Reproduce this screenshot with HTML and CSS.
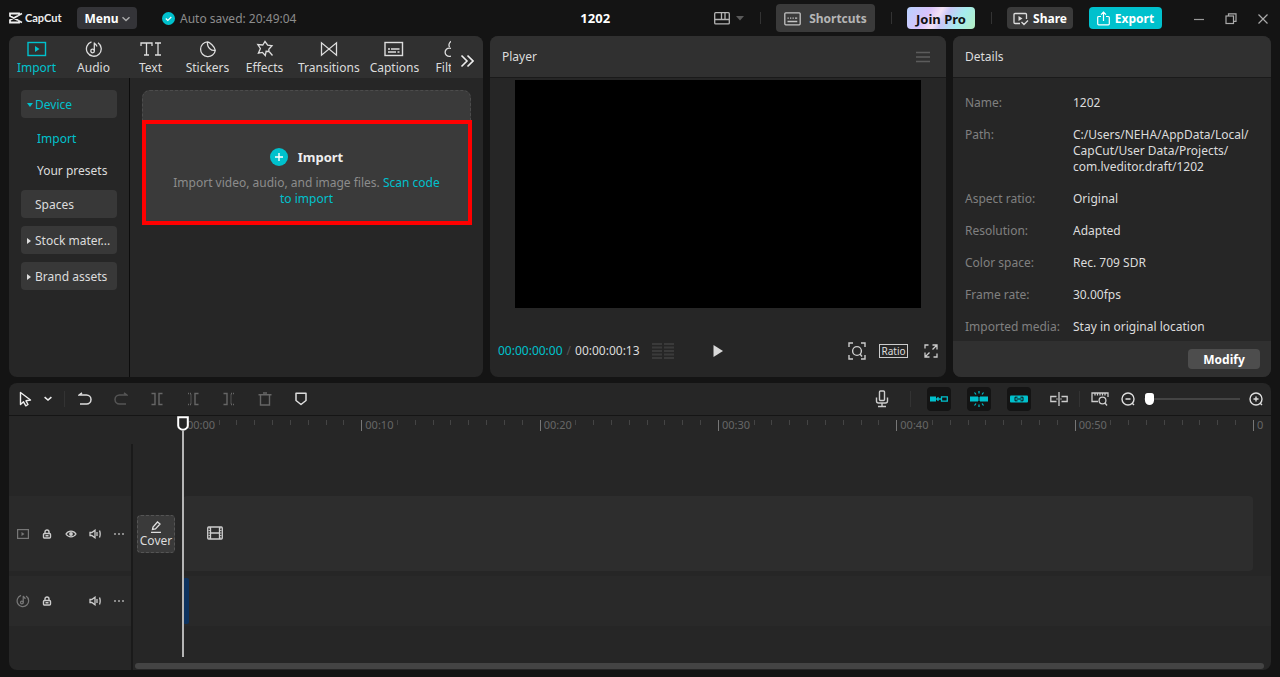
FILE: index.html
```html
<!DOCTYPE html>
<html lang="en">
<head>
    <meta charset="UTF-8">
    <meta name="viewport" content="width=device-width, initial-scale=1.0">
    <title>CapCut - 1202</title>
    <link rel="stylesheet" href="styles.css">
</head>
<body>
    <!-- Title bar -->
    <header class="topbar">
        <div class="logo">
            <svg width="14" height="12" viewBox="0 0 14 12"><path d="M13 1.5L10 3V1.5H1V4l8 4.2M13 10.5L10 9v1.5H1V8l8-4.2" fill="none" stroke="#eee" stroke-width="1.8"/></svg>
            <span>CapCut</span>
        </div>
        <button class="btn menu-btn">Menu<svg width="8" height="6" viewBox="0 0 8 6"><path d="M.5 1.200l3.500 3.300 3.500-3.300" fill="none" stroke="#aaa" stroke-width="1.500"/></svg></button>
        <div class="saved">
            <svg width="13" height="13" viewBox="0 0 13 13"><circle cx="6.5" cy="6.5" r="6.5" fill="#00c1cd"/><path d="M3.8 6.5l2 2 3.5-3.5" fill="none" stroke="#fff" stroke-width="1.2"/></svg>
            <span>Auto saved: 20:49:04</span>
        </div>
        <h1 class="project-title">1202</h1>
        <div class="top-actions">
            <button class="layout-btn" aria-label="Layout">
                <svg width="16" height="13" viewBox="0 0 16 13" fill="none" stroke="#b5b5b5" stroke-width="1.3"><rect x=".7" y=".7" width="14.6" height="11.2" rx="1"/><path d="M1 7.5h14M7.5 1v6.5M11 1v6.5"/></svg>
                <svg width="8" height="5" viewBox="0 0 8 5"><path d="M0 0h8L4 4.5z" fill="#5a5a5a"/></svg>
            </button>
            <span class="sep"></span>
            <button class="btn shortcuts-btn"><svg width="17" height="14" viewBox="0 0 17 14" fill="none" stroke="#c4c4c4" stroke-width="1.3"><rect x=".8" y=".8" width="15.4" height="12" rx="1"/><path d="M3.5 6.2h1.3M6 6.2h1.3M8.5 6.2h1.3M11 6.2h2.2M3.500 9.500h9.800"/></svg>Shortcuts</button>
            <span class="sep"></span>
            <button class="btn pro-btn">Join Pro</button>
            <span class="sep"></span>
            <button class="btn share-btn"><svg width="16" height="14" viewBox="0 0 16 14" fill="none" stroke="#ddd" stroke-width="1.3"><path d="M7 11.5H2a1 1 0 0 1-1-1v-8a1 1 0 0 1 1-1h10.500a1 1 0 0 1 1 1V7M8.500 10l2.500 2.500 4-4"/><path d="M5.500 4l4 2.500-4 2.500z" fill="#ddd" stroke="none"/></svg>Share</button>
            <button class="btn export-btn"><svg width="13" height="15" viewBox="0 0 13 15" fill="none" stroke="#fff" stroke-width="1.2"><path d="M4 5.500H1.700a1 1 0 0 0-1 1v6.300a1 1 0 0 0 1 1h9.600a1 1 0 0 0 1-1V6.500a1 1 0 0 0-1-1H9M6.500 10V1.300M4 3.700l2.500-2.500L9 3.700"/></svg>Export</button>
        </div>
        <div class="window-controls">
            <button aria-label="Minimize"><svg width="12" height="12" viewBox="0 0 12 12"><path d="M1 6.500h10" stroke="#999" stroke-width="1.2"/></svg></button>
            <button aria-label="Restore"><svg width="12" height="12" viewBox="0 0 12 12" fill="none" stroke="#aaa" stroke-width="1.200"><rect x="1" y="3" width="7.500" height="7.500"/><path d="M3.500 3V.8h7.500v7.500H8.500"/></svg></button>
            <button aria-label="Close"><svg width="12" height="12" viewBox="0 0 12 12"><path d="M1.500 1.500l9 9M10.500 1.500l-9 9" stroke="#aaa" stroke-width="1.200"/></svg></button>
        </div>
    </header>

    <main class="workspace">
        <!-- Media panel -->
        <section class="panel media">
            <nav class="tabs">
                <div class="tab-list">
                    <button class="tab active"><svg width="20" height="16" viewBox="0 0 20 16"><rect x="1" y="1.500" width="17.500" height="13" fill="none" stroke="#00c1cd" stroke-width="1.400"/><path d="M8 5l4.500 3L8 11z" fill="#00c1cd"/></svg>Import</button>
                    <button class="tab"><svg width="18" height="18" viewBox="0 0 18 18" fill="none" stroke="#ddd" stroke-width="1.300"><path d="M6.500 1.800A7.400 7.400 0 1 0 13 2.700M9.300 11V2.500c.3 1.800 2.500 1.800 2.500 4"/><circle cx="7.600" cy="11" r="1.800"/></svg>Audio</button>
                    <button class="tab"><svg width="22" height="16" viewBox="0 0 22 16" fill="none" stroke="#ddd" stroke-width="1.300"><path d="M1 5V2h11v3M6.500 2v12M4 14h5M15 2h6M15 14h6M18 2v12"/></svg>Text</button>
                    <button class="tab"><svg width="18" height="18" viewBox="0 0 18 18" fill="none" stroke="#ddd" stroke-width="1.300"><path d="M8.500 1.800a7.400 7.400 0 1 0 7.800 8.500M8.500 1.800c1.800 0 7.500 5 7.800 8.500-3.500.8-8.500-2-7.800-8.500z"/></svg>Stickers</button>
                    <button class="tab"><svg width="18" height="18" viewBox="0 0 18 18" fill="none" stroke="#ddd" stroke-width="1.300"><path d="M13 11.500l-.2-2.200 3.200-3.500-4.300-.7L9 1.500 6.800 5 1.800 4.500l2.600 4-2 4.700 4-.8 2.900 3.100.8-4.200zM13.500 12l3 3.500"/></svg>Effects</button>
                    <button class="tab"><svg width="18" height="16" viewBox="0 0 18 16" fill="none" stroke="#ddd" stroke-width="1.300"><path d="M1.500 1.800v12.400l15-12.400v12.400z"/></svg>Transitions</button>
                    <button class="tab"><svg width="20" height="16" viewBox="0 0 20 16" fill="none" stroke="#ddd" stroke-width="1.400"><rect x="1" y="1.500" width="17.500" height="13"/><path d="M4 8h2M7 8h8.500M4 11h8M13.500 11h2"/></svg>Captions</button>
                    <button class="tab"><svg width="18" height="18" viewBox="0 0 18 18" fill="none" stroke="#ddd" stroke-width="1.300"><path d="M5.500 7A4 4 0 1 1 12.500 7M8.500 9.500a4.200 4.200 0 1 0 0 5.500"/><circle cx="12.500" cy="12" r="4.200"/></svg>Filters</button>
                </div>
                <button class="more-tabs" aria-label="More"><svg width="14" height="14" viewBox="0 0 14 14" fill="none" stroke="#eee" stroke-width="1.600"><path d="M1.500 1.500L7 7l-5.500 5.500M7.500 1.500L13 7l-5.500 5.500"/></svg></button>
            </nav>
            <div class="media-body">
                <aside class="sidebar">
                    <button class="side-item open">Device</button>
                    <div class="side-sub">
                        <a href="#" class="active">Import</a>
                        <a href="#">Your presets</a>
                    </div>
                    <button class="side-item">Spaces</button>
                    <button class="side-item closed">Stock mater...</button>
                    <button class="side-item closed">Brand assets</button>
                </aside>
                <div class="library">
                    <div class="dropzone">
                        <button class="import-btn"><svg width="18" height="18" viewBox="0 0 18 18"><circle cx="9" cy="9" r="9" fill="#00c1cd"/><path d="M9 5v8M5 9h8" stroke="#fff" stroke-width="1.400"/></svg>Import</button>
                        <p>Import video, audio, and image files. <a href="#">Scan code<br>to import</a></p>
                        <div class="highlight"></div>
                    </div>
                </div>
            </div>
        </section>

        <!-- Player panel -->
        <section class="panel player">
            <div class="panel-header">
                <h2>Player</h2>
                <button aria-label="Player menu"><svg width="14" height="12" viewBox="0 0 14 12"><path d="M0 1.500h14M0 6h14M0 10.500h14" stroke="#5c5c5c" stroke-width="1.300"/></svg></button>
            </div>
            <div class="screen"></div>
            <div class="player-controls">
                <div class="timecode"><span class="current">00:00:00:00</span><span class="slash">/</span><span>00:00:00:13</span>
                    <svg width="22" height="16" viewBox="0 0 22 16" stroke="#3a3a3a" stroke-width="2"><path d="M0 1h10M0 4.500h10M0 8h10M0 11.500h10M0 15h10M12 1h10M12 4.500h10M12 8h10M12 11.500h10M12 15h10"/></svg>
                </div>
                <button class="play-btn" aria-label="Play"><svg width="10" height="12" viewBox="0 0 10 12"><path d="M.5 0l9.500 6-9.500 6z" fill="#d8d8d8"/></svg></button>
                <div class="view-controls">
                    <button aria-label="Zoom"><svg width="18" height="18" viewBox="0 0 18 18" fill="none" stroke="#ccc" stroke-width="1.400"><path d="M1 5V1h4M13 1h4v4M17 13v4h-4M5 17H1v-4M12 12l2 2.500"/><circle cx="9" cy="9" r="4.400"/></svg></button>
                    <button class="ratio-btn">Ratio</button>
                    <button class="fullscreen-btn" aria-label="Full screen"><svg width="14" height="14" viewBox="0 0 14 14" fill="none" stroke="#ccc" stroke-width="1.300"><path d="M1 4.500V1h3.500M9.500 13H13V9.500M8.500 1H13v4.500M13 1L8.500 5.500M1 8.500V13h4.500M1 13l4.500-4.500"/></svg></button>
                </div>
            </div>
        </section>

        <!-- Details panel -->
        <section class="panel details">
            <div class="panel-header">
                <h2>Details</h2>
            </div>
            <dl class="detail-list">
                <dt>Name:</dt><dd>1202</dd>
                <dt>Path:</dt><dd>C:/Users/NEHA/AppData/Local/<br>CapCut/User Data/Projects/<br>com.lveditor.draft/1202</dd>
                <dt>Aspect ratio:</dt><dd>Original</dd>
                <dt>Resolution:</dt><dd>Adapted</dd>
                <dt>Color space:</dt><dd>Rec. 709 SDR</dd>
                <dt>Frame rate:</dt><dd>30.00fps</dd>
                <dt>Imported media:</dt><dd>Stay in original location</dd>
            </dl>
            <div class="panel-footer">
                <button class="btn modify-btn">Modify</button>
            </div>
        </section>
    </main>

    <!-- Timeline -->
    <section class="panel timeline">
        <div class="toolbar">
            <button class="tool" aria-label="Select"><svg width="14" height="16" viewBox="0 0 14 16"><path d="M1.500 1.500v12l3-2.700 2.300 4 2.200-1.300-2-3.700 4.500-.8z" fill="none" stroke="#eee" stroke-width="1.400" stroke-linejoin="round"/></svg></button>
            <button class="tool-caret" aria-label="Select mode"><svg width="8" height="6" viewBox="0 0 8 6"><path d="M.6 1.200L4 4l3.400-2.800" fill="none" stroke="#eee" stroke-width="1.600"/></svg></button>
            <span class="sep"></span>
            <div class="tool-group">
                <button class="tool" aria-label="Undo"><svg width="14" height="14" viewBox="0 0 14 14" fill="none" stroke="#ddd" stroke-width="1.500"><path d="M4 .8L1.200 3H8.500a4.500 4.500 0 0 1 0 9H2"/></svg></button>
                <button class="tool" aria-label="Redo"><svg width="14" height="14" viewBox="0 0 14 14" fill="none" stroke="#555" stroke-width="1.500"><path d="M10 .8L12.800 3H5.500a4.500 4.500 0 0 0 0 9H12"/></svg></button>
                <button class="tool" aria-label="Split"><svg width="12" height="14" viewBox="0 0 12 14" fill="none" stroke="#666" stroke-width="1.400"><path d="M.5 1.500H4v11H.5M11.500 1.500H8v11h3.500"/></svg></button>
                <button class="tool" aria-label="Delete left"><svg width="12" height="14" viewBox="0 0 12 14" fill="none" stroke="#666" stroke-width="1.400"><path d="M1 1.500h3v11H1" stroke-dasharray="1 1"/><path d="M11.500 1.500H8v11h3.500"/></svg></button>
                <button class="tool" aria-label="Delete right"><svg width="12" height="14" viewBox="0 0 12 14" fill="none" stroke="#666" stroke-width="1.400"><path d="M.5 1.500H4v11H.5"/><path d="M11 1.500H8v11h3" stroke-dasharray="1 1"/></svg></button>
                <button class="tool" aria-label="Delete"><svg width="14" height="14" viewBox="0 0 14 14" fill="none" stroke="#666" stroke-width="1.400"><path d="M.5 2.800h13M2.500 2.800v10.200h9V2.800M5 1h4"/></svg></button>
                <button class="tool" aria-label="Marker"><svg width="12" height="14" viewBox="0 0 12 14"><path d="M1 1.200h10v7.300L6 12.500 1 8.500z" fill="none" stroke="#ddd" stroke-width="1.500" stroke-linejoin="round"/></svg></button>
            </div>
            <div class="toolbar-right">
                <button class="tool" aria-label="Record"><svg width="14" height="18" viewBox="0 0 14 18" fill="none" stroke="#ccc" stroke-width="1.400"><rect x="4.500" y="1" width="5" height="9.500" rx="1"/><path d="M1.500 7.500v3.500a2 2 0 0 0 2 2h7a2 2 0 0 0 2-2V7.500M7 13v3.500M3 16.500h8"/></svg></button>
                <span class="sep wide"></span>
                <div class="mode-group">
                    <button class="tool mode" aria-label="Main track magnet"><svg width="18" height="8" viewBox="0 0 18 8"><path d="M0 1.500h6v5H0z" fill="#00c1cd"/><path d="M6.500 4h5M8.500 2.200L6.700 4l1.800 1.800M11.500 1.800h5.800v4.400h-5.800z" fill="none" stroke="#00c1cd" stroke-width="1.300"/></svg></button>
                    <button class="tool mode" aria-label="Auto snapping"><svg width="18" height="16" viewBox="0 0 18 16"><path d="M0 5.500h8v5H0zM10 5.500h8v5h-8zM8 6h2v4H8z" fill="#00c1cd"/><path d="M9 0v2.500M4.500 1.500L6 3.500M13.500 1.500L12 3.500M9 13.500V16M4.500 14.500L6 12.500M13.500 14.500L12 12.500" stroke="#00c1cd" stroke-width="1.200"/><path d="M9 6v4" stroke="#141414"/></svg></button>
                    <button class="tool mode" aria-label="Linkage"><svg width="18" height="8" viewBox="0 0 18 8"><rect y=".5" width="18" height="7" rx="1" fill="#00c1cd"/><path d="M7.500 2.200H5v3.600h2.500M10.500 2.200H13v3.600h-2.500M6.500 4h5" fill="none" stroke="#141414" stroke-width="1"/></svg></button>
                    <button class="tool" aria-label="Preview axis"><svg width="18" height="14" viewBox="0 0 18 14" fill="none" stroke="#ccc" stroke-width="1.300"><path d="M6.500 4.500H.8v5h5.700M11.500 4.500h5.700v5h-5.700M9 0v14M6.500 7h1M10.500 7h1"/></svg></button>
                </div>
                <span class="sep"></span>
                <button class="tool" aria-label="Preview"><svg width="18" height="14" viewBox="0 0 18 14" fill="none" stroke="#ccc" stroke-width="1.300"><path d="M7 9.500H1V1h16v4M4 1.500v2M6.500 1.500v2M9 1.500v2M11.500 1.500v2M14 1.500v2M14 11l2 2.500"/><circle cx="11.500" cy="8.500" r="3.400"/></svg></button>
                <button class="tool zoom-out" aria-label="Zoom out"><svg width="14" height="14" viewBox="0 0 14 14" fill="none" stroke="#ddd" stroke-width="1.400"><circle cx="7" cy="7" r="6"/><path d="M4.500 7h5M11 11l2 2"/></svg></button>
                <input class="zoom" type="range" min="0" max="100" value="1" aria-label="Timeline zoom">
                <button class="tool" aria-label="Zoom in"><svg width="14" height="14" viewBox="0 0 14 14" fill="none" stroke="#ddd" stroke-width="1.400"><circle cx="7" cy="7" r="6"/><path d="M4.500 7h5M7 4.500v5M11 11l2 2"/></svg></button>
            </div>
        </div>
        <div class="timeline-body">
            <div class="track-heads">
                <div class="track-head video">
                    <span><svg width="12" height="10" viewBox="0 0 12 10"><rect x=".6" y=".6" width="10.800" height="8.800" fill="none" stroke="#777" stroke-width="1.200"/><path d="M4.500 3l3 2-3 2z" fill="#777"/></svg></span>
                    <button aria-label="Lock"><svg width="10" height="10" viewBox="0 0 10 10" fill="none" stroke="#ccc" stroke-width="1.400"><rect x="1.500" y="4.500" width="7" height="4.500" rx="1"/><path d="M3 4.500V3a2 2 0 0 1 4 0v1.500M3.500 6.800h3"/></svg></button>
                    <button aria-label="Hide"><svg width="12" height="8" viewBox="0 0 12 8"><path d="M1 4c2.500-3.800 7.500-3.800 10 0-2.500 3.800-7.500 3.800-10 0z" fill="none" stroke="#ccc" stroke-width="1.300"/><circle cx="6" cy="4" r="1.900" fill="#ccc"/></svg></button>
                    <button aria-label="Mute"><svg width="12" height="10" viewBox="0 0 12 10" fill="none" stroke="#ccc" stroke-width="1.300"><path d="M1 3.500h1.800L6 1.200v7.600L2.800 6.500H1zM8 3v4M10.500 1.500c.8 2 .8 5 0 7"/></svg></button>
                    <button aria-label="More"><svg width="10" height="2" viewBox="0 0 10 2"><path d="M0 0h2v2H0zM4 0h2v2H4zM8 0h2v2H8z" fill="#8a8a8a"/></svg></button>
                </div>
                <div class="track-head audio">
                    <span><svg width="14" height="14" viewBox="0 0 18 18" fill="none" stroke="#777" stroke-width="1.600"><path d="M6.500 1.800A7.400 7.400 0 1 0 13 2.700M9.300 11V2.500c.3 1.800 2.500 1.800 2.500 4"/><circle cx="7.600" cy="11" r="1.800"/></svg></span>
                    <button aria-label="Lock"><svg width="10" height="10" viewBox="0 0 10 10" fill="none" stroke="#ccc" stroke-width="1.400"><rect x="1.500" y="4.500" width="7" height="4.500" rx="1"/><path d="M3 4.500V3a2 2 0 0 1 4 0v1.500M3.500 6.800h3"/></svg></button>
                    <span></span>
                    <button aria-label="Mute"><svg width="12" height="10" viewBox="0 0 12 10" fill="none" stroke="#ccc" stroke-width="1.300"><path d="M1 3.500h1.800L6 1.200v7.600L2.800 6.500H1zM8 3v4M10.500 1.500c.8 2 .8 5 0 7"/></svg></button>
                    <button aria-label="More"><svg width="10" height="2" viewBox="0 0 10 2"><path d="M0 0h2v2H0zM4 0h2v2H4zM8 0h2v2H8z" fill="#8a8a8a"/></svg></button>
                </div>
            </div>
            <div class="canvas">
                <div class="ruler" id="ruler"></div>
                <div class="track video-track">
                    <div class="cover-slot">
                        <button class="cover-btn"><svg width="12" height="12" viewBox="0 0 12 12" fill="none" stroke="#ddd" stroke-width="1.300"><path d="M2.500 8.500L3 6l4.500-5L10 3 5.500 8zM1 11.300h10"/></svg>Cover</button>
                    </div>
                    <div class="lane"><svg width="16" height="14" viewBox="0 0 16 14" fill="none" stroke="#ccc" stroke-width="1.300"><rect x=".7" y="1" width="14.600" height="12" rx="1"/><path d="M3.500 1v12M12.500 1v12M4 7h8"/><path d="M2.200 1.500v11M13.800 1.500v11" stroke-dasharray="1 1.500"/></svg></div>
                </div>
                <div class="track audio-track">
                    <div class="lane"><div class="clip"></div></div>
                </div>
                <div class="scrollbar"></div>
                <div class="playhead"><svg width="12" height="15" viewBox="0 0 12 15"><path d="M1.200 1.200h9.600v8.300c0 2-2 4.300-4.800 4.300S1.200 11.500 1.200 9.500z" fill="#262626" stroke="#fff" stroke-width="2"/></svg></div>
            </div>
        </div>
    </section>

    <script>
        const labels = ['00:00', '00:10', '00:20', '00:30', '00:40', '00:50', '01:00'];

        // One block per 10 seconds, with a small tick each second
        function drawRuler() {
            document.getElementById('ruler').innerHTML = labels.map(label => `
                <div class="ruler-block">
                    ${'<i></i>'.repeat(10)}
                    <span>${label}</span>
                </div>
            `).join('');
        }

        drawRuler();
    </script>
</body>
</html>
```

FILE: styles.css
```css
:root {
    --bg: #141414;
    --panel: #262626;
    --header: #303030;
    --button: #3a3a3a;
    --accent: #00c1cd;
    --text: #dcdcdc;
    --muted: #808080;
}

* {
    box-sizing: border-box;
}

body {
    margin: 0;
    min-height: 100vh;
    padding: 0 9px 7px;
    display: flex;
    flex-direction: column;
    background: var(--bg);
    color: var(--text);
    font-family: 'Noto Sans', 'Segoe UI', sans-serif;
    font-size: 12px;
    line-height: 16px;
}

button {
    display: flex;
    align-items: center;
    justify-content: center;
    padding: 0;
    border: 0;
    background: none;
    color: inherit;
    font: inherit;
    white-space: nowrap;
}

a {
    color: inherit;
    text-decoration: none;
}

svg {
    display: block;
    flex-shrink: 0;
}

h1, h2, p, dl, dd {
    margin: 0;
}

.sep {
    width: 1px;
    height: 12px;
    background: #333;
}

/* Title bar */
.topbar {
    display: flex;
    align-items: center;
    height: 36px;
    margin-right: -8px;
}

.logo {
    display: flex;
    align-items: center;
    gap: 2px;
    width: 68px;
    color: #eee;
    font-family: Lato, sans-serif;
    font-size: 11px;
    font-weight: bold;
}

.btn {
    height: 22px;
    padding-top: 1px;
    border-radius: 4px;
    color: #fff;
    font-weight: bold;
}

.menu-btn {
    width: 60px;
    gap: 3px;
    background: #343438;
}

.saved {
    display: flex;
    align-items: center;
    gap: 5px;
    margin-left: 25px;
    padding-top: 1px;
    color: #8c8c8c;
}

.project-title {
    flex: 1;
    padding-left: 180px;
    color: #fff;
    font-size: 13px;
    text-align: center;
}

.top-actions {
    display: flex;
    align-items: center;
    gap: 16px;
}

.top-actions .sep {
    margin-right: -1px;
}

.layout-btn {
    gap: 6px;
}

.shortcuts-btn {
    width: 99px;
    height: 28px;
    gap: 8px;
    background: var(--button);
    color: #b5b5b5;
}

.pro-btn {
    width: 68px;
    background: linear-gradient(120deg, #b9d2ff 0%, #d9c3fb 30%, #f3e2f5 45%, #c9c8f7 55%, #a5ecee 75%, #b4efc0 100%);
    color: #111;
    font-size: 13px;
}

.share-btn {
    width: 66px;
    gap: 4px;
    background: var(--button);
}

.export-btn {
    width: 73px;
    gap: 5px;
    background: var(--accent);
}

.window-controls {
    display: flex;
    margin-left: 21px;
}

.window-controls button {
    width: 32px;
    height: 28px;
    padding-top: 2px;
}

/* Panels */
.workspace {
    display: grid;
    grid-template-columns: 474fr 456fr 318fr;
    gap: 7px;
}

.panel {
    display: flex;
    flex-direction: column;
    min-width: 0;
    overflow: hidden;
    border-radius: 8px;
    background: var(--panel);
}

.panel-header {
    display: flex;
    align-items: center;
    justify-content: space-between;
    height: 42px;
    padding: 1px 16px 0 12px;
    border-bottom: 1px solid #1a1a1a;
    background: var(--header);
}

.panel-header h2 {
    font-size: 12px;
    font-weight: normal;
}

/* Media */
.tabs {
    display: flex;
    align-items: center;
    height: 42px;
    padding: 2px 8px 0 0;
    background: var(--header);
}

.tab-list {
    display: flex;
    flex: 1;
    min-width: 0;
    margin-left: -1px;
    overflow: hidden;
}

.tab {
    flex-direction: column;
    flex-shrink: 0;
    justify-content: space-between;
    min-width: 57px;
    height: 36px;
    padding: 0 5px;
}

.tab svg {
    height: 18px;
}

.active {
    color: var(--accent);
}

.more-tabs {
    width: 24px;
    height: 38px;
    padding: 6px 0 0 8px;
}

.media-body {
    display: flex;
    flex: 1;
}

.sidebar {
    width: 121px;
    padding: 12px 0 12px 12px;
    border-right: 1px solid #0c0c0c;
}

.side-item {
    position: relative;
    justify-content: flex-start;
    width: 96px;
    height: 28px;
    margin-bottom: 8px;
    padding: 1px 0 0 14px;
    border-radius: 4px;
    background: #383838;
}

.side-item.open {
    margin-bottom: 4px;
    color: var(--accent);
}

.side-item.open::before,
.side-item.closed::before {
    content: '';
    position: absolute;
    left: 6px;
    border: 3px solid transparent;
}

.side-item.open::before {
    top: 13px;
    border-width: 4px 3px 0;
    border-top-color: var(--accent);
}

.side-item.closed::before {
    top: 12px;
    border-width: 3px 0 3px 4px;
    border-left-color: #ddd;
}

.side-sub {
    margin-bottom: 4px;
}

.side-sub a {
    display: block;
    padding: 9px 0 7px 16px;
}

.library {
    flex: 1;
    padding: 12px;
}

.dropzone {
    position: relative;
    padding: 57px 20px 16px;
    border: 1px dashed #4c4c4c;
    border-radius: 8px;
    background: #3a3a3a;
    color: #8c8c8c;
    text-align: center;
}

.import-btn {
    gap: 10px;
    margin: 0 auto 9px;
    color: #eee;
    font-size: 13px;
    font-weight: bold;
}

.dropzone a {
    color: var(--accent);
}

.highlight {
    position: absolute;
    top: 29px;
    right: -2px;
    bottom: -2px;
    left: -1px;
    border: 4px solid #f00;
    pointer-events: none;
}

/* Player */
.screen {
    margin: 2px 25px 0;
    aspect-ratio: 406 / 228;
    background: #000;
}

.player-controls {
    display: grid;
    grid-template-columns: 1fr auto 1fr;
    align-items: center;
    height: 52px;
    margin-top: auto;
    padding: 0 8px;
}

.timecode {
    display: flex;
    align-items: center;
}

.timecode svg {
    margin-left: 12px;
}

.timecode .current {
    color: var(--accent);
}

.timecode .slash {
    margin: 0 4px;
    color: #555;
}

.view-controls {
    display: flex;
    align-items: center;
    justify-content: flex-end;
    gap: 13px;
}

.fullscreen-btn {
    margin-left: 3px;
}

.ratio-btn {
    width: 29px;
    height: 14px;
    border: 1px solid #ccc;
    font-size: 10px;
}

/* Details */
.detail-list {
    display: grid;
    grid-template-columns: 108px 1fr;
    row-gap: 16px;
    padding: 17px 0 6px 12px;
}

.detail-list dt {
    color: var(--muted);
}

.panel-footer {
    display: flex;
    justify-content: flex-end;
    margin-top: auto;
    padding: 8px 11px;
    background: var(--header);
}

.modify-btn {
    width: 72px;
    height: 20px;
    background: #4d4d4d;
}

/* Timeline */
.timeline {
    flex: 1;
    margin-top: 6px;
}

.toolbar {
    display: flex;
    align-items: center;
    height: 33px;
    padding: 0 3px 0 5px;
    border-bottom: 1px solid #151515;
}

.toolbar .sep {
    height: 16px;
    margin: 0 8px;
}

.toolbar .sep.wide {
    margin: 0 16px;
}

.tool {
    width: 24px;
    height: 24px;
    border-radius: 4px;
}

.tool-caret {
    width: 16px;
    height: 24px;
    margin-left: 2px;
}

.tool-group {
    display: flex;
    gap: 12px;
}

.toolbar-right {
    display: flex;
    align-items: center;
    margin-left: auto;
}

.mode-group {
    display: flex;
    gap: 16px;
}

.mode {
    background: #141414;
}

.zoom-out {
    margin-left: 4px;
}

.zoom {
    width: 96px;
    height: 16px;
    margin: 0 4px;
    background: none;
    appearance: none;
}

.zoom::-webkit-slider-runnable-track {
    height: 2px;
    background: #444;
}

.zoom::-webkit-slider-thumb {
    width: 9px;
    height: 12px;
    margin-top: -5px;
    border-radius: 3px 3px 5px 5px;
    background: #fff;
    appearance: none;
}

.timeline-body {
    display: flex;
    flex: 1;
}

.track-heads {
    width: 124px;
    margin-top: 28px;
    padding-top: 52px;
    border-right: 2px solid #1a1a1a;
}

.track-head {
    display: flex;
    align-items: center;
    padding-left: 2px;
    background: #2a2a2a;
}

.track-head > * {
    display: flex;
    align-items: center;
    justify-content: center;
    width: 24px;
    height: 24px;
}

.track-head.video,
.video-track {
    height: 75px;
    margin-bottom: 5px;
}

.track-head.audio,
.audio-track {
    height: 50px;
}

.canvas {
    position: relative;
    display: flex;
    flex: 1;
    flex-direction: column;
}

.ruler {
    display: grid;
    grid-template-columns: repeat(6, 1fr) 11px;
    height: 28px;
    margin: 0 7px 52px 50px;
    overflow: hidden;
}

.ruler-block {
    position: relative;
    display: flex;
    min-width: 0;
    overflow: hidden;
    padding-top: 4px;
}

.ruler-block i {
    flex: 1;
    height: 5px;
    border-left: 1px solid #444;
}

.ruler-block i:first-child {
    height: 11px;
    border-color: #777;
}

.ruler-block i:nth-child(2),
.ruler-block:last-child i:not(:first-child) {
    border-color: transparent;
}

/* the time sits over the first ticks */
.ruler-block span {
    position: absolute;
    top: 1px;
    left: 4px;
    color: #666;
    font-size: 11px;
}

.track {
    display: flex;
    align-items: stretch;
}

.cover-slot {
    display: flex;
    align-items: center;
    width: 50px;
    padding-left: 4px;
}

.cover-btn {
    flex-direction: column;
    width: 38px;
    height: 38px;
    padding-top: 2px;
    border: 1px dashed #555;
    border-radius: 4px;
    background: var(--button);
}

.lane {
    display: flex;
    flex: 1;
    align-items: center;
}

.video-track .lane {
    margin-right: 18px;
    padding: 0 0 1px 24px;
    border-radius: 4px;
    background: #2d2d2d;
}

.audio-track .lane {
    margin-left: 50px;
    background: #292929;
}

.clip {
    width: 6px;
    height: 46px;
    border-radius: 2px;
    background: #0c325f;
}

.scrollbar {
    height: 6px;
    margin: auto 7px 1px 2px;
    border-radius: 3px;
    background: #444;
}

.playhead {
    position: absolute;
    top: 0;
    bottom: 13px;
    left: 44px;
    width: 12px;
}

.playhead::after {
    content: '';
    position: absolute;
    top: 14px;
    bottom: 0;
    left: 5px;
    width: 2px;
    background: #b5b5b5;
}
```
